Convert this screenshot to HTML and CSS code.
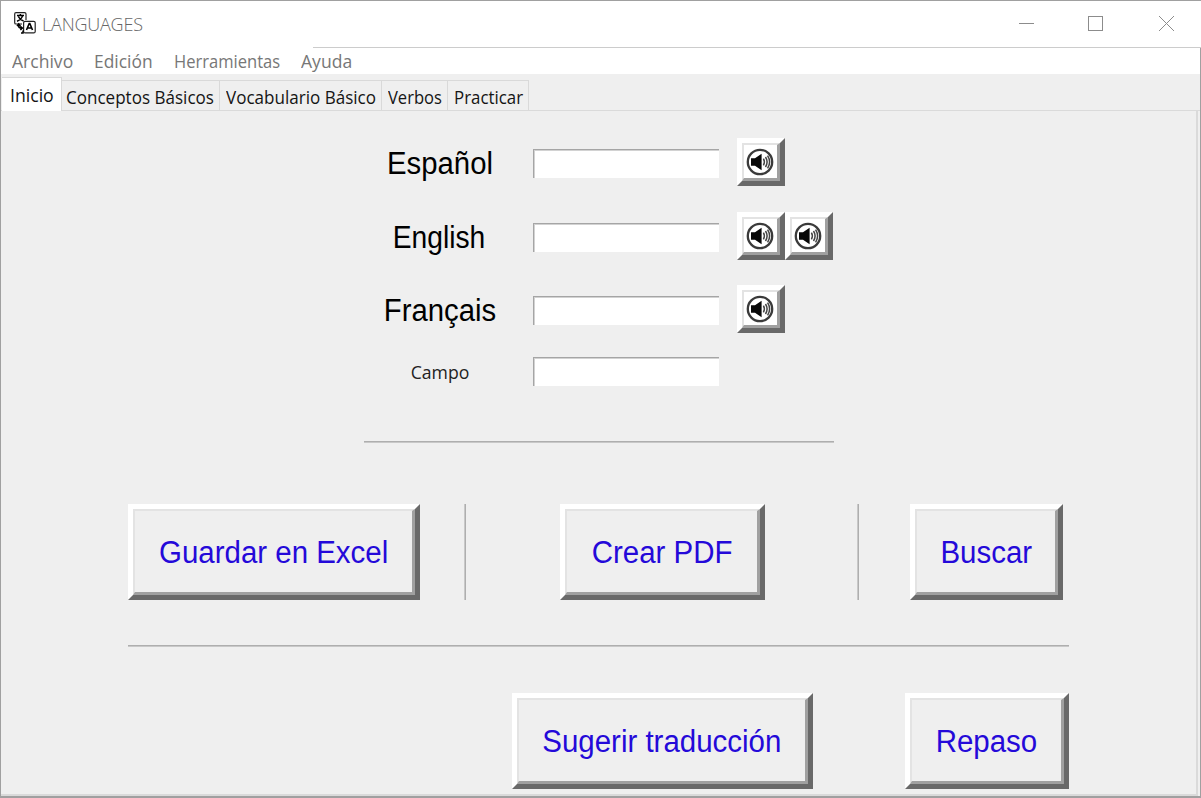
FILE: index.html
```html
<!DOCTYPE html>
<html lang="es">
<head>
<meta charset="utf-8">
<title>LANGUAGES</title>
<link rel="stylesheet" href="styles.css">
</head>
<body>
<svg class="defs" width="0" height="0">
  <symbol id="speaker" viewBox="0 0 28 28">
    <circle cx="14" cy="14" r="12.2" fill="#fff" stroke="#3a3a3a" stroke-width="2.3"/>
    <path d="M5 10.200h4l6.600-4.400v16.400L9 17.800H5z" fill="#080808"/>
    <path d="M17.400 10.700q2 3.300 0 6.600M19.500 9q3.200 5 0 10M21.600 7.700q4 6.300 0 12.600" fill="none" stroke="#444" stroke-width="1.5"/>
  </symbol>
</svg>
<div class="window">
  <header class="titlebar">
    <svg class="logo" width="22" height="22" viewBox="0 0 22 22" fill="none" stroke="#222" stroke-width="1.2">
      <path d="M8 12H2Q.7 12 .7 10.700V2Q.7.7 2 .7h8.500Q12 .7 12 2v6"/>
      <path d="M3 3.400h7M6.400 2v1.400M8.600 3.600Q7.400 7.500 3 9.200M4.300 4.500Q6 8 9.600 9" stroke="#000" stroke-width="1.500"/>
      <rect x="9.600" y="9.300" width="11.600" height="11.600" rx="1.500" fill="#fff"/>
      <path d="M12.500 18l2.700-6.500h.6l2.700 6.500M13.600 16h3.800" stroke="#000" stroke-width="1.600"/>
      <path d="M4.700 12v2.600q0 1.400 1.400 1.400H8M3 14l1.700-2 1.700 2M6.300 14.400L8.400 16l-2 2M9 18.500v2.500H7" stroke="#000" stroke-width="1.500"/>
    </svg>
    <span class="title">LANGUAGES</span>
    <svg class="controls" width="157" height="18" viewBox="0 0 157 18" fill="none" stroke="#8c8c8c">
      <path d="M0 9.500h15"/>
      <rect x="69.500" y="2.500" width="14" height="14"/>
      <path d="M140 2l15 15M155 2l-15 15"/>
    </svg>
  </header>
  <nav class="menu">
    <span class="m1">Archivo</span><span class="m2">Edición</span><span class="m3">Herramientas</span><span class="m4">Ayuda</span>
  </nav>
  <div class="tabs">
    <div class="tab active"><span>Inicio</span></div>
    <div class="tab t2"><span>Conceptos Básicos</span></div>
    <div class="tab t3"><span>Vocabulario Básico</span></div>
    <div class="tab t4"><span>Verbos</span></div>
    <div class="tab t5"><span>Practicar</span></div>
  </div>
  <main class="panel">
    <section class="form">
      <div class="row"><label>Español</label><input type="text"><div class="sounds"><button class="sound"><svg><use href="#speaker"/></svg></button></div></div>
      <div class="row"><label class="en">English</label><input type="text"><div class="sounds"><button class="sound"><svg><use href="#speaker"/></svg></button><button class="sound"><svg><use href="#speaker"/></svg></button></div></div>
      <div class="row"><label>Français</label><input type="text"><div class="sounds"><button class="sound"><svg><use href="#speaker"/></svg></button></div></div>
      <div class="row small"><label>Campo</label><input type="text"></div>
    </section>
    <div class="rule short"></div>
    <section class="actions">
      <button class="big save"><span><b>Guardar en Excel</b></span></button>
      <i class="vrule"></i>
      <button class="big pdf"><span><b>Crear PDF</b></span></button>
      <i class="vrule v2"></i>
      <button class="big find"><span><b>Buscar</b></span></button>
    </section>
    <div class="rule long"></div>
    <section class="actions bottom">
      <button class="big suggest"><span><b>Sugerir traducción</b></span></button>
      <button class="big review"><span><b>Repaso</b></span></button>
    </section>
  </main>
</div>
</body>
</html>
```
FILE: styles.css
```css
* { box-sizing: border-box; }
body { margin: 0; overflow: hidden; background: #efefef; font-family: "Open Sans", sans-serif; }
.defs { display: block; }
.window {
  width: 1201px; height: 798px; display: flex; flex-direction: column;
  border: solid #a0a0a0; border-width: 1px 1px 2px 1px; background: #efefef;
}
.titlebar { height: 46px; display: flex; background: #fff; margin-right: -1px; flex: none; }
.logo { margin: 11px 0 0 13px; }
.title { margin: 10px 0 0 6px; font: 300 18px/26px "Open Sans", sans-serif; color: #666; letter-spacing: -.2px; }
.controls { margin: 13px 25px 0 auto; }
.menu { height: 27px; flex: none; background: #fff; display: flex; color: #777; font-size: 18px; line-height: 27px; position: relative; white-space: nowrap; }
.menu::before { content: ""; position: absolute; left: 312px; right: -1px; top: 0; height: 1px; background: #ccc; }
.menu span { transform-origin: 0 0; padding-top: 1px; }
.m1 { margin-left: 11px; width: 82px; transform: scaleX(.975); }
.m2 { width: 80px; transform: scaleX(.967); }
.m3 { width: 127px; transform: scaleX(.92); }
.m4 { transform: scaleX(.975); }
.tabs { height: 37px; flex: none; display: flex; align-items: flex-end; padding-left: 1px; border-bottom: 1px solid #dadada; font-size: 18px; color: #151515; }
.tab { height: 30px; border: solid #d9d9d9; border-width: 1px 1px 0 0; padding: 3px 0 0 4px; line-height: 26px; white-space: nowrap; }
.tab span { display: inline-block; transform-origin: 0 50%; transform: scaleX(.947); }
.active { height: 34px; width: 60px; margin-bottom: -1px; padding: 4px 0 0 8px; background: #fff; position: relative; }
.active span { transform: scaleX(.98); }
.t2 { width: 158px; }
.t3 { width: 162px; padding-left: 6px; }
.t4 { width: 66px; padding-left: 6px; }
.t4 span { transform: scaleX(.92); }
.t5 { width: 81px; padding-left: 6px; }
.t5 span { transform: scaleX(.937); }
.panel { flex: 1; border: solid #dadada; border-width: 0 2px 2px 0; margin-right: 2px; display: flex; flex-direction: column; }
.form { margin: 27px 0 0 363px; }
.row { display: grid; grid-template-columns: 152px 186px 96px; grid-template-rows: 48px; column-gap: 17px; height: 48px; margin-bottom: 25.5px; align-items: center; }
.row label { text-align: center; font: 31px/48px "Liberation Sans", sans-serif; color: #000; padding-top: 4px; white-space: nowrap; transform: scaleX(.945); }
.row .en { transform: translateX(-1px) scaleX(.91); }
.row input { width: 186px; height: 29px; border: solid #a5a5a5; border-width: 1px 0 0 1px; box-shadow: inset 1px 1px #d2d2d2; background: #fff; padding: 0; margin: 3px 0 0; }
.sounds { display: flex; margin-left: 1px; }
.sound { width: 48px; height: 48px; flex: none; padding: 0; background: #fff; border: 5px solid; border-color: #fff #696969 #696969 #fff; display: flex; }
.sound svg { width: 38px; height: 38px; border: solid; border-width: 2px 3px 3px 2px; border-color: #e3e3e3 #a0a0a0 #a0a0a0 #e3e3e3; padding: 3px 3px 2px 2px; }
.row.small { grid-template-rows: 30px; height: 30px; margin: -2px 0 0; }
.small label { font: 18px/30px "Open Sans", sans-serif; padding: 0; color: #222; transform: scaleX(.98); }
.row.small input { margin-top: 0; }
.rule { height: 2px; background: #aeaeae; border-bottom: 1px solid #c8c8c8; }
.short { width: 470px; margin: 54px 0 0 363px; }
.actions { display: flex; height: 96px; margin: 61px 0 0 127px; }
.big { height: 96px; flex: none; padding: 0; background: #efefef; border: 5px solid; border-color: #fff #696969 #696969 #fff; color: #2409d9; font: 31px "Liberation Sans", sans-serif; }
.big span { display: flex; height: 100%; align-items: center; justify-content: center; padding-top: 3px; border: solid; border-width: 2px 3px 3px 2px; border-color: #e3e3e3 #a0a0a0 #a0a0a0 #e3e3e3; white-space: nowrap; }
.big b { font-weight: normal; transform: scaleX(.95); }
.save { width: 292px; }
.vrule { width: 2px; height: 96px; margin-left: 44px; background: #aeaeae; border-left: 1px solid #c8c8c8; }
.pdf { width: 205px; margin-left: 94px; }
.v2 { margin-left: 92px; }
.find { width: 153px; margin-left: 51px; }
.long { width: 941px; margin: 45px 0 0 127px; }
.bottom { margin: 46px 0 0 511px; }
.suggest { width: 301px; }
.review { width: 164px; margin-left: 92px; }
```
